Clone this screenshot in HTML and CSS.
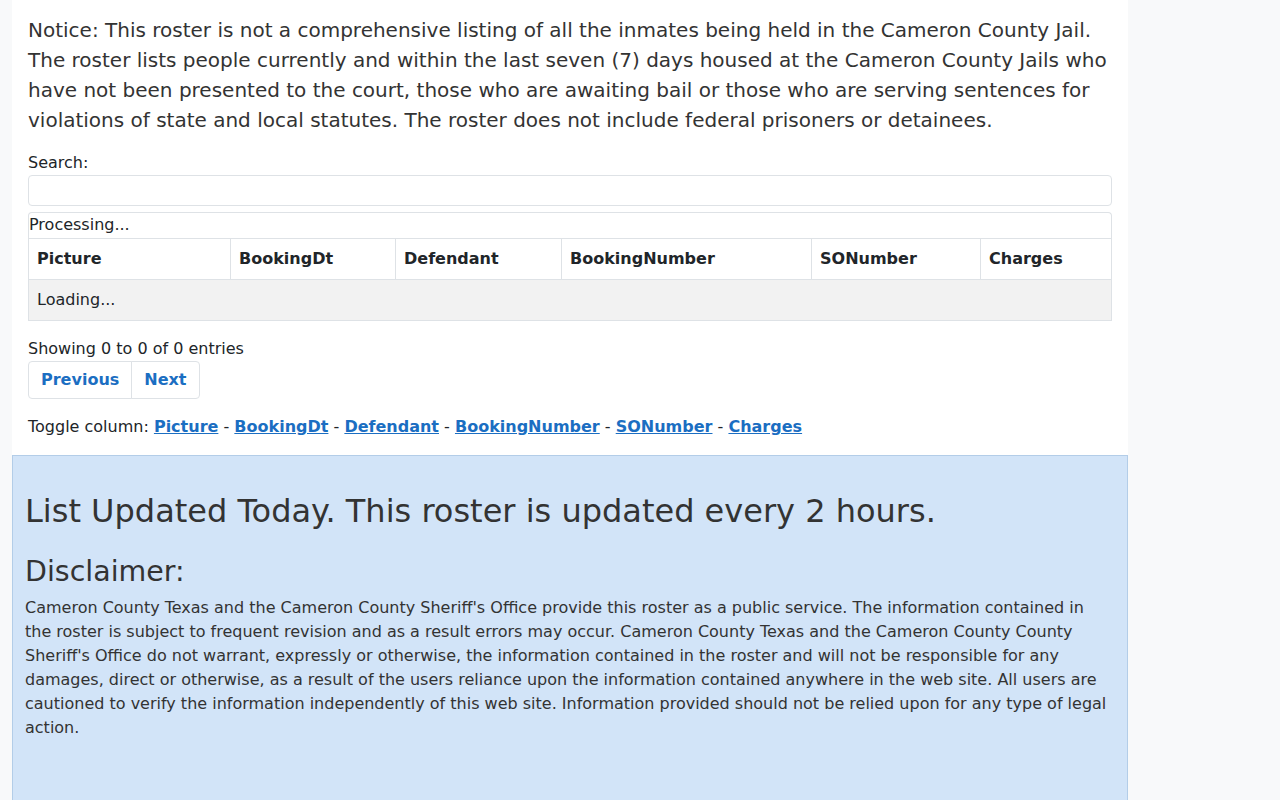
FILE: index.html
```html
<!DOCTYPE html>
<html>

<head>
  <meta charset='utf-8'>
  <title>Cameron County Jail Roster</title>
  <link rel="stylesheet" href="styles.css">
</head>

<body>
  <div class='page'>
    <div class='content'>
      <p class='notice'>Notice: This roster is not a comprehensive listing of all the inmates being held in the Cameron County Jail. The roster lists people currently and within the last seven (7) days housed at the Cameron County Jails who have not been presented to the court, those who are awaiting bail or those who are serving sentences for violations of state and local statutes. The roster does not include federal prisoners or detainees.</p>

      <label for='search' class='search-label'>Search:</label>
      <input type='search' id='search' class='search-input'>

      <div class='processing'>Processing...</div>
      <table class='roster'>
        <thead>
          <tr>
            <th class='col-picture'>Picture</th>
            <th class='col-date'>BookingDt</th>
            <th class='col-defendant'>Defendant</th>
            <th class='col-booking'>BookingNumber</th>
            <th class='col-so'>SONumber</th>
            <th class='col-charges'>Charges</th>
          </tr>
        </thead>
        <tbody>
          <tr>
            <td colspan='6'>Loading...</td>
          </tr>
        </tbody>
      </table>

      <div class='info'>Showing 0 to 0 of 0 entries</div>
      <ul class='pagination'>
        <li><a href='#'>Previous</a></li>
        <li><a href='#'>Next</a></li>
      </ul>

      <p class='toggle'>Toggle column: <a href='#'>Picture</a> - <a href='#'>BookingDt</a> - <a href='#'>Defendant</a> - <a href='#'>BookingNumber</a> - <a href='#'>SONumber</a> - <a href='#'>Charges</a></p>
    </div>

    <div class='updated'>
      <h2>List Updated Today. This roster is updated every 2 hours.</h2>
      <h3>Disclaimer:</h3>
      <p>Cameron County Texas and the Cameron County Sheriff's Office provide this roster as a public service. The information contained in the roster is subject to frequent revision and as a result errors may occur. Cameron County Texas and the Cameron County County Sheriff's Office do not warrant, expressly or otherwise, the information contained in the roster and will not be responsible for any damages, direct or otherwise, as a result of the users reliance upon the information contained anywhere in the web site. All users are cautioned to verify the information independently of this web site. Information provided should not be relied upon for any type of legal action.</p>
    </div>
  </div>
</body>

</html>
```

FILE: styles.css
```css
body {
  margin: 0;
  font-family: "DejaVu Sans", sans-serif;
  font-size: 16px;
  line-height: 1.5;
  color: #212529;
  background-color: #f8f9fa;
}

.page {
  width: 1116px;
  margin-left: 12px;
  background-color: #fff;
}

.content {
  padding: 15px 16px 1px;
}

.notice {
  margin: 0 0 16px;
  font-size: 20px;
  line-height: 30px;
  color: #333;
}

.search-label {
  display: block;
  margin-bottom: 0;
}

.search-input {
  display: block;
  box-sizing: border-box;
  width: 100%;
  height: 31px;
  margin: 0;
  padding: 4px 8px;
  border: 1px solid #dee2e6;
  border-radius: 4px;
  font-family: inherit;
  font-size: 14px;
}

.processing {
  box-sizing: border-box;
  height: 26px;
  margin-top: 6px;
  padding: 0;
  line-height: 24px;
  border: 1px solid #dee2e6;
  border-bottom: none;
  border-radius: 4px 4px 0 0;
}

.roster {
  width: 100%;
  border-collapse: collapse;
  table-layout: fixed;
}

.roster th,
.roster td {
  padding: 8px;
  text-align: left;
  border: 1px solid #dee2e6;
}

.roster th {
  font-weight: bold;
}

.roster tbody td {
  background-color: #f2f2f2;
}

.col-picture { width: 185px; }
.col-date { width: 148px; }
.col-defendant { width: 149px; }
.col-booking { width: 233px; }
.col-so { width: 152px; }

.info {
  margin-top: 16px;
}

.pagination {
  display: flex;
  margin: 0 0 16px;
  padding: 0;
  list-style: none;
}

.pagination a {
  display: block;
  padding: 6px 12px;
  border: 1px solid #dee2e6;
  font-weight: bold;
  color: #1b6ec2;
  text-decoration: none;
}

.pagination li:first-child a {
  border-radius: 4px 0 0 4px;
}

.pagination li + li a {
  margin-left: -1px;
  border-radius: 0 4px 4px 0;
}

.toggle {
  margin: 0 0 15px;
}

.toggle a {
  font-weight: bold;
  color: #1b6ec2;
}

.updated {
  padding: 36px 12px 80px;
  border: 1px solid #b3cde8;
  background-color: #d2e4f8;
  color: #333;
}

.updated h2 {
  margin: 0 0 25px;
  font-size: 32px;
  font-weight: 500;
  line-height: 1.2;
}

.updated h3 {
  margin: 0 0 6px;
  font-size: calc(1.3rem + .6vw);
  font-weight: 500;
  line-height: 1.2;
}

.updated p {
  margin: 0;
}
```
